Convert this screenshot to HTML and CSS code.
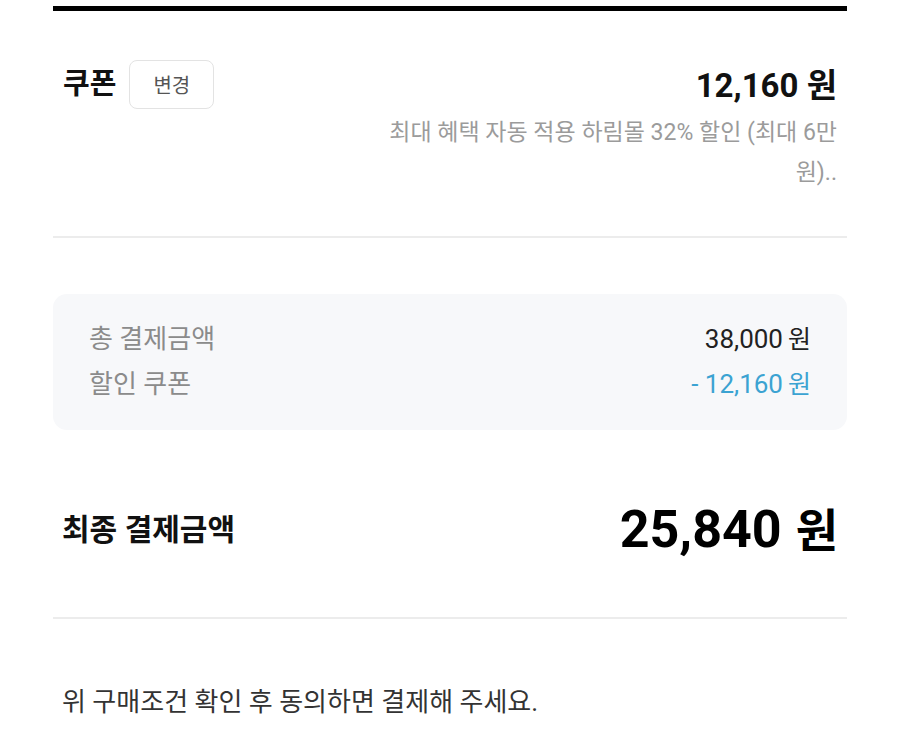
FILE: index.html
```html
<!DOCTYPE html>
<html lang="ko">
<head>
  <meta charset="UTF-8" />
  <meta name="viewport" content="width=device-width, initial-scale=1.0"/>
  <title>결제</title>
  <link rel="stylesheet" href="styles.css">
</head>
<body>
  <div class="page">
    <div class="top-bar"></div>

    <div class="coupon">
      <div class="coupon-row">
        <div class="coupon-title">
          <h3>쿠폰</h3>
          <button class="change-btn">변경</button>
        </div>
        <div class="coupon-amount">12,160 원</div>
      </div>
      <div class="coupon-desc">최대 혜택 자동 적용 하림몰 32% 할인 (최대 6만<br>원)..</div>
    </div>

    <div class="summary">
      <div class="summary-row">
        <span class="label">총 결제금액</span>
        <span class="value">38,000<span class="unit">원</span></span>
      </div>
      <div class="summary-row">
        <span class="label">할인 쿠폰</span>
        <span class="value discount">- 12,160<span class="unit">원</span></span>
      </div>
    </div>

    <div class="final">
      <h3>최종 결제금액</h3>
      <div class="final-amount">25,840<span class="unit">원</span></div>
    </div>

    <p class="notice">위 구매조건 확인 후 동의하면 결제해 주세요.</p>
  </div>
</body>
</html>
```

FILE: styles.css
```css
html, body {
  margin: 0;
  padding: 0;
  background: #fff;
  color: #111;
  font-family: Roboto, 'Noto Sans CJK KR', sans-serif;
}

.page {
  margin: 0 53px;
  padding-top: 6px;
}

.top-bar {
  height: 5px;
  background: #000;
}

.coupon {
  padding: 49px 10px 43px;
  border-bottom: 2px solid #ececec;
}

.coupon-row {
  display: flex;
  justify-content: space-between;
  align-items: center;
  height: 49px;
}

.coupon-title {
  display: flex;
  align-items: center;
  gap: 13px;
}

.coupon-title h3 {
  margin: 0;
  font-size: 29px;
  font-weight: 700;
  line-height: 49px;
}

.change-btn {
  width: 85px;
  height: 49px;
  background: #fff;
  border: 1px solid #e3e3e3;
  border-radius: 8px;
  font-family: inherit;
  font-size: 20px;
  color: #555;
  padding: 0;
}

.coupon-amount {
  font-size: 33px;
  font-weight: 700;
  color: #111;
  margin-top: -4px;
}

.coupon-desc {
  margin-top: 4px;
  text-align: right;
  font-size: 23px;
  line-height: 40px;
  color: #9b9b9b;
}

.summary {
  margin-top: 56px;
  background: #f7f8fa;
  border-radius: 14px;
  padding: 20px 36px 26px;
}

.summary-row {
  display: flex;
  justify-content: space-between;
  align-items: center;
  height: 45px;
  font-size: 26px;
}

.summary-row .label {
  color: #8b8b8b;
}

.summary-row .value {
  color: #222;
  font-size: 26px;
}

.summary-row .unit {
  margin-left: 5px;
  font-size: 25px;
}

.summary-row .discount {
  color: #3ba3d2;
}

.final {
  display: flex;
  justify-content: space-between;
  align-items: center;
  height: 60px;
  margin-top: 67px;
  padding: 0 9px 60px;
  border-bottom: 2px solid #ececec;
}

.final h3 {
  margin: 0;
  font-size: 30px;
  font-weight: 700;
}

.final-amount {
  font-size: 52px;
  font-weight: 700;
  color: #000;
}

.final-amount .unit {
  margin-left: 14px;
  font-size: 46px;
}

.notice {
  margin: 66px 9px 0;
  font-size: 26px;
  line-height: 34px;
  color: #333;
}
```
